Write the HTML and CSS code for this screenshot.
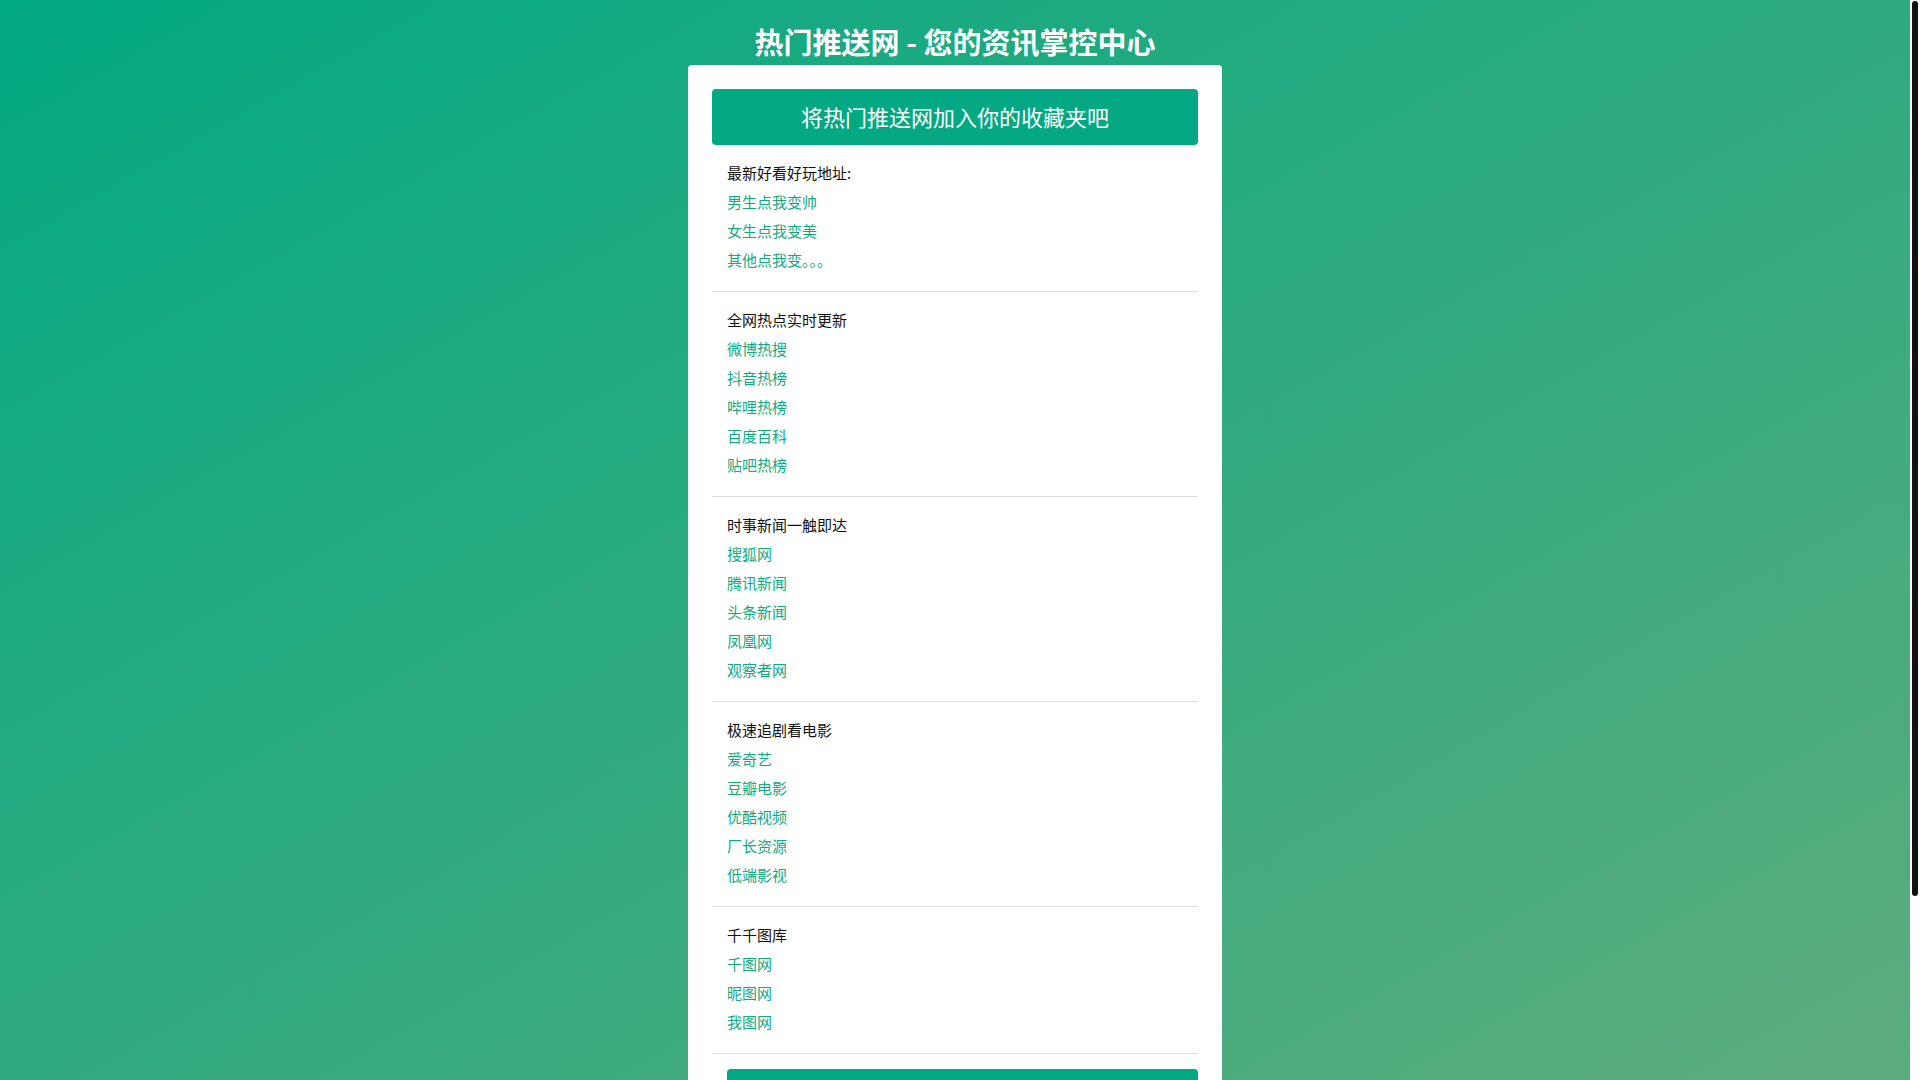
FILE: index.html
```html
<!DOCTYPE html>
<html lang="zh-CN">
<head>
<meta charset="utf-8">
<title>热门推送网 - 您的资讯掌控中心</title>
<link rel="stylesheet" href="styles.css">
</head>
<body>
<h1 class="site-title">热门推送网 - 您的资讯掌控中心</h1>
<main class="card">
  <div class="fav-btn">将热门推送网加入你的收藏夹吧</div>

  <section class="group">
    <div class="group-title">最新好看好玩地址:</div>
    <div class="row"><a href="#">男生点我变帅</a></div>
    <div class="row"><a href="#">女生点我变美</a></div>
    <div class="row"><a href="#">其他点我变。。。</a></div>
  </section>

  <section class="group">
    <div class="group-title">全网热点实时更新</div>
    <div class="row"><a href="#">微博热搜</a></div>
    <div class="row"><a href="#">抖音热榜</a></div>
    <div class="row"><a href="#">哔哩热榜</a></div>
    <div class="row"><a href="#">百度百科</a></div>
    <div class="row"><a href="#">贴吧热榜</a></div>
  </section>

  <section class="group">
    <div class="group-title">时事新闻一触即达</div>
    <div class="row"><a href="#">搜狐网</a></div>
    <div class="row"><a href="#">腾讯新闻</a></div>
    <div class="row"><a href="#">头条新闻</a></div>
    <div class="row"><a href="#">凤凰网</a></div>
    <div class="row"><a href="#">观察者网</a></div>
  </section>

  <section class="group">
    <div class="group-title">极速追剧看电影</div>
    <div class="row"><a href="#">爱奇艺</a></div>
    <div class="row"><a href="#">豆瓣电影</a></div>
    <div class="row"><a href="#">优酷视频</a></div>
    <div class="row"><a href="#">厂长资源</a></div>
    <div class="row"><a href="#">低端影视</a></div>
  </section>

  <section class="group">
    <div class="group-title">千千图库</div>
    <div class="row"><a href="#">千图网</a></div>
    <div class="row"><a href="#">昵图网</a></div>
    <div class="row"><a href="#">我图网</a></div>
  </section>

  <div class="bottom-btn"></div>
</main>
<div class="fake-scrollbar"><div class="fake-thumb"></div></div>
</body>
</html>
```

FILE: styles.css
```css
html {
  min-height: 100%;
}
body {
  margin: 0;
  padding: 0 10px 154px 0;
  min-height: 100vh;
  font-family: "Noto Sans CJK SC", "Noto Sans", sans-serif;
  background: linear-gradient(to bottom right, #03a982, #5dac7d);
  background-attachment: fixed;
}
.fake-scrollbar {
  position: fixed;
  top: 0;
  right: 0;
  width: 10px;
  height: 100vh;
  background: #fff;
}
.fake-thumb {
  margin: 1px 0 0 2px;
  width: 6px;
  height: 895px;
  background: #111;
  border-radius: 3px;
}
.site-title {
  margin: 20px 0 0;
  height: 45px;
  line-height: 42px;
  text-align: center;
  color: #fff;
  font-size: 29px;
  font-weight: bold;
}
.card {
  width: 486px;
  margin: 0 auto;
  padding: 24px;
  background: #fff;
  border-radius: 4px;
}
.fav-btn {
  height: 56px;
  line-height: 54px;
  text-align: center;
  color: #fff;
  font-size: 22px;
  background: #04a882;
  border-radius: 4px;
}
.group {
  padding: 13px 15px 17px;
  border-bottom: 1px solid #dedede;
}
.group-title,
.row {
  height: 29px;
  line-height: 29px;
  font-size: 15px;
}
.group-title {
  color: #111;
}
.row a {
  color: #12a982;
  text-decoration: none;
}
.bottom-btn {
  margin: 15px 0 0 15px;
  height: 56px;
  background: #04a882;
  border-radius: 4px;
}
```
